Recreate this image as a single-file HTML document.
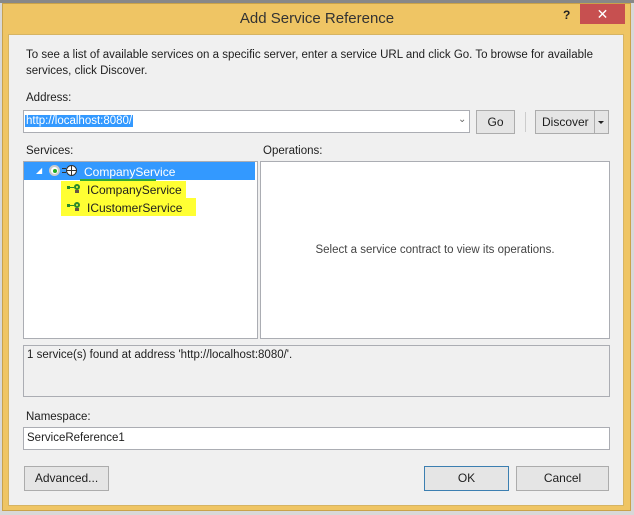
<!DOCTYPE html>
<html><head><style>
*{margin:0;padding:0;box-sizing:border-box}
body{width:634px;height:515px;background:#d8d8d8;position:relative;overflow:hidden;font-family:"Liberation Sans",sans-serif;font-size:12px;color:#1e1e1e}
.a{position:absolute}
.frame{left:2px;top:3px;width:629px;height:508px;background:#efc564;border:1px solid #c9a24a}
.client{left:8px;top:34px;width:616px;height:472px;background:#f0f0f0;border:1px solid #d6b463}
.box{background:#fff;border:1px solid #abadb3}
.btn{background:#e5e5e5;border:1px solid #acacac;text-align:center;line-height:23px}
.t{white-space:nowrap;font-size:11.5px}
.hl{background:#ffff33}
</style></head><body>
<div class="a" style="left:0;top:0;width:634px;height:3px;background:#888"></div>
<div class="a frame"></div>
<div class="a t" style="left:0;top:10px;width:634px;text-align:center;font-size:15px;color:#333">Add Service Reference</div>
<div class="a" style="left:563px;top:8px;font-weight:bold;font-size:12px;color:#222">?</div>
<div class="a" style="left:580px;top:4px;width:45px;height:20px;background:#c75050;color:#fff;text-align:center;font-size:14px;line-height:20px">✕</div>
<div class="a client"></div>
<div class="a t" style="left:26px;top:49px">To see a list of available services on a specific server, enter a service URL and click Go. To browse for available</div>
<div class="a t" style="left:26px;top:65px">services, click Discover.</div>
<div class="a t" style="left:26px;top:92px">Address:</div>
<div class="a box" style="left:23px;top:110px;width:447px;height:23px"></div>
<div class="a t" style="left:25px;top:115px;background:#3399ff;color:#fff;padding:0 1px">http://localhost:8080/</div>
<div class="a" style="left:458px;top:114px;color:#666;font-size:10px">⌄</div>
<div class="a btn" style="left:476px;top:110px;width:39px;height:24px">Go</div>
<div class="a" style="left:525px;top:112px;width:1px;height:20px;background:#ccc"></div>
<div class="a btn" style="left:535px;top:110px;width:74px;height:24px;text-align:left;padding-left:6px">Discover</div>
<div class="a" style="left:594px;top:111px;width:1px;height:22px;background:#acacac"></div>
<div class="a" style="left:598px;top:121px;width:0;height:0;border-left:3px solid transparent;border-right:3px solid transparent;border-top:3px solid #222"></div>
<div class="a t" style="left:26px;top:145px">Services:</div>
<div class="a t" style="left:263px;top:145px">Operations:</div>
<div class="a box" style="left:23px;top:161px;width:235px;height:178px"></div>
<div class="a" style="left:24px;top:162px;width:231px;height:18px;background:#3399ff"></div>
<div class="a" style="left:36px;top:166px;color:#fff;font-size:8px">◢</div>
<div class="a" style="left:49px;top:165px;width:11px;height:11px;border-radius:50%;background:#fff;border:2px solid #ccc"></div>
<div class="a" style="left:53px;top:169px;width:4px;height:4px;border-radius:50%;background:#2a2"></div>
<div class="a" style="left:62px;top:168px;width:4px;height:5px;border-top:1px solid #333;border-bottom:1px solid #333"></div>
<div class="a" style="left:66px;top:165px;width:11px;height:11px;border-radius:50%;background:#fff;border:1px solid #333"></div>
<div class="a" style="left:71px;top:165px;width:1px;height:11px;background:#333"></div>
<div class="a" style="left:66px;top:170px;width:11px;height:1px;background:#333"></div>
<div class="a t" style="left:84px;top:165px;color:#fff;font-size:12px">CompanyService</div>
<div class="a" style="left:80px;top:179px;width:76px;height:2px;background:#3a3"></div>
<div class="a hl" style="left:61px;top:181px;width:125px;height:18px"></div>
<div class="a hl" style="left:61px;top:198px;width:135px;height:18px"></div>
<div class="a" style="left:67px;top:186px;width:3px;height:3px;background:#2a8a2a"></div>
<div class="a" style="left:70px;top:187px;width:4px;height:1px;background:#2a8a2a"></div>
<div class="a" style="left:74px;top:184px;width:6px;height:6px;border:2px solid #2a8a2a;border-radius:50%"></div>
<div class="a" style="left:75px;top:190px;width:4px;height:3px;background:#654"></div>
<div class="a" style="left:67px;top:204px;width:3px;height:3px;background:#2a8a2a"></div>
<div class="a" style="left:70px;top:205px;width:4px;height:1px;background:#2a8a2a"></div>
<div class="a" style="left:74px;top:202px;width:6px;height:6px;border:2px solid #2a8a2a;border-radius:50%"></div>
<div class="a" style="left:75px;top:208px;width:4px;height:3px;background:#654"></div>
<div class="a t" style="left:87px;top:183px;font-size:12px">ICompanyService</div>
<div class="a t" style="left:87px;top:201px;font-size:12px">ICustomerService</div>
<div class="a box" style="left:260px;top:161px;width:350px;height:178px"></div>
<div class="a t" style="left:260px;top:244px;width:350px;text-align:center;color:#444">Select a service contract to view its operations.</div>
<div class="a" style="left:23px;top:345px;width:587px;height:52px;border:1px solid #abadb3;background:#f0f0f0"></div>
<div class="a t" style="left:27px;top:349px">1 service(s) found at address 'http://localhost:8080/'.</div>
<div class="a t" style="left:26px;top:411px">Namespace:</div>
<div class="a box" style="left:23px;top:427px;width:587px;height:23px"></div>
<div class="a t" style="left:27px;top:432px">ServiceReference1</div>
<div class="a btn" style="left:24px;top:466px;width:85px;height:25px">Advanced...</div>
<div class="a btn" style="left:424px;top:466px;width:85px;height:25px;border-color:#3c7fb1">OK</div>
<div class="a btn" style="left:516px;top:466px;width:93px;height:25px">Cancel</div>
</body></html>
